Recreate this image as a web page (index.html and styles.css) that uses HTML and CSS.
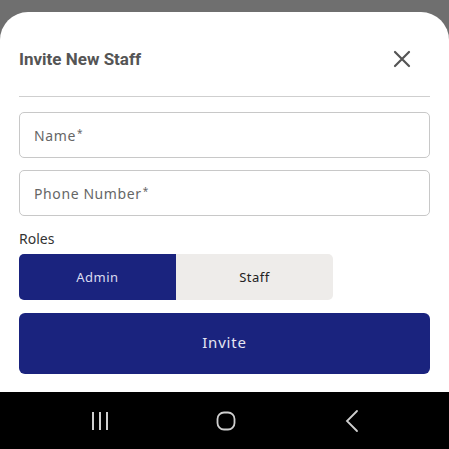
FILE: index.html
```html
<!DOCTYPE html>
<html>
<head>
<meta charset="utf-8">
<link rel="stylesheet" href="styles.css">
</head>
<body>
<div class="sheet">
  <div class="header">
    <h1 class="title">Invite New Staff</h1>
    <svg class="close" width="18" height="18" viewBox="0 0 18 18"><path d="M2 2 L16 16 M16 2 L2 16" stroke="#555" stroke-width="2.2" stroke-linecap="round"/></svg>
  </div>
  <div class="divider"></div>
  <div class="field"><span class="ph">Name<sup class="req">*</sup></span></div>
  <div class="field"><span class="ph">Phone Number<sup class="req">*</sup></span></div>
  <div class="label">Roles</div>
  <div class="segment">
    <div class="seg active">Admin</div>
    <div class="seg">Staff</div>
  </div>
  <button class="invite">Invite</button>
</div>
<div class="navbar">
  <svg width="18" height="20" viewBox="0 0 18 20"><path d="M2 1 V19 M9 1 V19 M16 1 V19" stroke="#cfcfcf" stroke-width="2"/></svg>
  <svg width="20" height="20" viewBox="0 0 20 20"><rect x="1.5" y="1.5" width="17" height="17" rx="6.5" fill="none" stroke="#cfcfcf" stroke-width="1.8"/></svg>
  <svg width="14" height="24" viewBox="0 0 14 24"><path d="M12 2 L2 12 L12 22" fill="none" stroke="#cfcfcf" stroke-width="1.8" stroke-linecap="round"/></svg>
</div>
</body>
</html>
```
FILE: styles.css
```css
html, body { margin: 0; padding: 0; }
body {
  background: #6f6f6f;
  width: 449px;
  height: 449px;
  overflow: hidden;
  font-family: "Noto Sans", sans-serif;
}
.sheet {
  margin-top: 12px;
  height: 380px;
  background: #fff;
  border-radius: 28px 28px 0 0;
  padding: 0 19px;
  box-sizing: border-box;
  display: flex;
  flex-direction: column;
}
.header {
  display: flex;
  align-items: center;
  justify-content: space-between;
  height: 24px;
  margin-top: 35px;
}
.title {
  margin: 0;
  font-family: Roboto, sans-serif;
  font-weight: 700;
  font-size: 17px;
  color: #555;
}
.close { margin-right: 19px; }
.divider {
  height: 1px;
  background: #cfcfcf;
  margin-top: 25px;
}
.field {
  height: 46px;
  border: 1px solid #c8c8c8;
  border-radius: 5px;
  box-sizing: border-box;
  display: flex;
  align-items: center;
  padding-left: 14px;
  margin-top: 15px;
}
.field + .field { margin-top: 12px; }
.ph {
  font-size: 14px;
  color: #666;
  letter-spacing: 0.6px;
}
.req {
  font-size: 10px;
  vertical-align: 4px;
  line-height: 0;
  margin-left: 1px;
}
.label {
  margin-top: 13px;
  font-size: 14px;
  color: #333;
  line-height: 20px;
}
.segment {
  display: flex;
  width: 314px;
  height: 46px;
  margin-top: 5px;
  border-radius: 5px;
  overflow: hidden;
}
.seg {
  flex: 1;
  display: flex;
  align-items: center;
  justify-content: center;
  background: #eeecea;
  color: #222;
  font-size: 13px;
  letter-spacing: 0.5px;
}
.seg.active {
  background: #1a237e;
  color: #dadcf0;
}
.invite {
  margin-top: 13px;
  height: 61px;
  border: none;
  border-radius: 6px;
  background: #1a237e;
  color: #e6e6f2;
  font-family: "Noto Sans", sans-serif;
  font-size: 15px;
  letter-spacing: 0.8px;
  padding: 0 0 3px;
}
.navbar {
  height: 57px;
  background: #000;
  display: grid;
  grid-template-columns: repeat(3, 126px);
  justify-items: center;
  align-items: center;
  padding: 0 0 0 37px;
}
```
